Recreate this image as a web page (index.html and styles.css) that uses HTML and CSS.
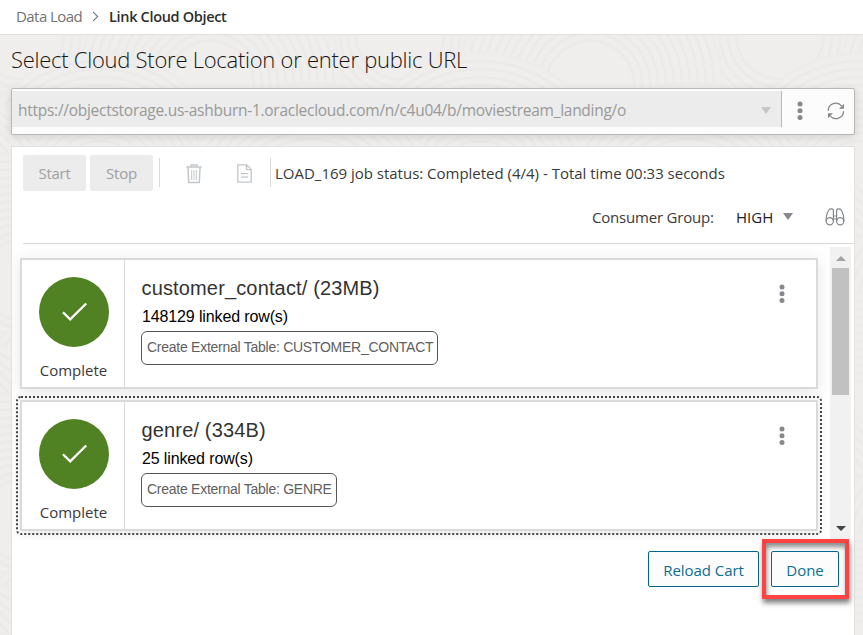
FILE: index.html
```html
<!DOCTYPE html>
<html lang="en">
<head>
<meta charset="utf-8">
<title>Link Cloud Object</title>
<link rel="stylesheet" href="styles.css">
</head>
<body>
<svg width="0" height="0" class="defs" aria-hidden="true">
  <symbol id="dots" viewBox="0 0 6 20"><circle cx="3" cy="3" r="2.5"/><circle cx="3" cy="9.8" r="2.5"/><circle cx="3" cy="16.6" r="2.5"/></symbol>
  <symbol id="check" viewBox="0 0 26 20"><path d="M1 10.2 8.2 17.4 24.2 1.5" fill="none" stroke="#fff" stroke-width="2.3"/></symbol>
</svg>
<header class="crumbs">
  <span class="crumb">Data Load</span>
  <svg class="chevron" width="7" height="11" viewBox="0 0 7 11"><path d="M1 .8 5.6 5.5 1 10.2"/></svg>
  <span class="crumb current">Link Cloud Object</span>
</header>
<main class="page">
  <svg class="texture" aria-hidden="true">
    <defs>
      <g id="rings">
        <circle r="132" fill="#efeeed" stroke="#edecea"/><circle r="124"/><circle r="116"/><circle r="108"/><circle r="100"/><circle r="92"/><circle r="84"/><circle r="76"/><circle r="68"/><circle r="60"/><circle r="52"/><circle r="44"/>
      </g>
      <pattern id="contours" width="380" height="240" patternUnits="userSpaceOnUse">
        <g fill="none" stroke="#ebeae8" stroke-width="2.4">
          <use href="#rings" x="20" y="0"/><use href="#rings" x="400" y="0"/>
          <use href="#rings" x="210" y="50"/><use href="#rings" x="100" y="150"/>
          <use href="#rings" x="310" y="180"/><use href="#rings" x="-70" y="180"/>
          <use href="#rings" x="20" y="250"/><use href="#rings" x="400" y="250"/><use href="#rings" x="200" y="290"/>
        </g>
      </pattern>
    </defs>
    <rect width="100%" height="100%" fill="url(#contours)"/>
  </svg>
  <h1 class="heading"><span>Select Cloud Store Location or enter public URL</span></h1>
  <div class="location">
    <div class="url"><span class="url-text">https://objectstorage.us-ashburn-1.oraclecloud.com/n/c4u04/b/moviestream_landing/o</span><i class="caret pale"></i></div>
    <svg class="dots" width="6" height="20"><use href="#dots"/></svg>
    <svg class="refresh" width="18" height="18" viewBox="0 0 18 18"><g fill="none" stroke="#85898d" stroke-width="1.3"><path d="M1.2 8.8A7.6 7.6 0 0 1 14.6 3.9"/><path d="M16.6 9.2A7.6 7.6 0 0 1 3.4 14.1"/></g><path d="M17 1.8v5h-5zM1 16.2v-5h5z" fill="#85898d"/></svg>
  </div>
  <section class="panel">
    <div class="toolbar">
      <button class="btn muted">Start</button>
      <button class="btn muted">Stop</button>
      <i class="rule first"></i>
      <svg class="trash" width="16" height="20" viewBox="0 0 16 20" fill="none" stroke="#c3c7ca"><path d="M.3 3h15.4M5 2.8V1h6v1.8M2 3.5l.7 15h10.6l.7-15" stroke-width="1.5"/><path d="M5.7 6v10M8 6v10M10.3 6v10"/></svg>
      <svg class="doc" width="15" height="19" viewBox="0 0 15 19" fill="none" stroke="#c3c7ca" stroke-width="1.3"><path d="M.8 .8h9l4.4 4.6v12.8H.8zM9.5 .8v4.9h4.7M4 9.7h7M4 13.2h7"/></svg>
      <i class="rule second"></i>
      <span class="status">LOAD_169 job status: Completed (4/4) - Total time 00:33 seconds</span>
    </div>
    <div class="filters">
      <span class="group-label">Consumer Group:</span>
      <span class="group-value">HIGH</span>
      <i class="caret"></i>
      <svg class="binoculars" width="20" height="18" viewBox="0 0 20 18" fill="none" stroke="#85898d" stroke-width="1.2"><circle cx="4.8" cy="13.2" r="3.6"/><circle cx="15.2" cy="13.2" r="3.6"/><path d="M1.1 13.2C1.2 8 2.4 4 3.8 2 4.7 .6 7.8.5 8.4 2V13.2M18.9 13.2C18.8 8 17.6 4 16.2 2 15.3 .6 12.2.5 11.6 2V13.2M8.4 8h3.2M8.4 11h3.2"/></svg>
    </div>
    <div class="list">
      <div class="cards">
        <article class="card">
          <div class="state"><div class="disc"><svg width="26" height="20"><use href="#check"/></svg></div><span class="state-text">Complete</span></div>
          <div class="info"><h2>customer_contact/ (23MB)</h2><p>148129 linked row(s)</p><span class="tag">Create External Table: CUSTOMER_CONTACT</span></div>
          <svg class="dots" width="6" height="20"><use href="#dots"/></svg>
        </article>
        <article class="card focused">
          <div class="state"><div class="disc"><svg width="26" height="20"><use href="#check"/></svg></div><span class="state-text">Complete</span></div>
          <div class="info"><h2>genre/ (334B)</h2><p>25 linked row(s)</p><span class="tag">Create External Table: GENRE</span></div>
          <svg class="dots" width="6" height="20"><use href="#dots"/></svg>
        </article>
      </div>
      <div class="scrollbar"><i class="arrow up"></i><i class="thumb"></i><i class="arrow down"></i></div>
    </div>
    <footer class="actions">
      <button class="btn outline reload">Reload Cart</button>
      <div class="marked"><button class="btn outline done">Done</button></div>
    </footer>
  </section>
</main>
</body>
</html>
```
FILE: styles.css
```css
* { box-sizing: border-box; }
body { margin: 0; height: 635px; overflow: hidden; background: #fff; font-family: "Open Sans", "Noto Sans", sans-serif; font-size: 15px; color: #3a3a3a; display: flex; flex-direction: column; }
h1, h2, p { margin: 0; font-weight: 400; }
button { font: inherit; padding: 0; margin: 0; }
i { display: block; flex: none; }
svg { flex: none; display: block; }
.defs { position: absolute; }
.crumbs { height: 35px; flex: none; border-bottom: 1px solid #e1e0df; display: flex; align-items: center; padding: 0 0 2px 16px; white-space: nowrap; }
.crumb { width: 66px; color: #737373; letter-spacing: -.55px; }
.crumb.current { width: auto; color: #2d2d2d; font-weight: 600; font-size: 14.5px; letter-spacing: -.33px; }
.chevron { margin: 0 10px; fill: none; stroke: #6b7780; stroke-width: 1.1; }
.page { position: relative; flex: 1; display: flex; flex-direction: column; padding: 0 8px 0 11px; background: #efeeed; min-height: 0; }
.texture { position: absolute; inset: 0; width: 100%; height: 100%; }
.heading { position: relative; height: 53px; line-height: 49px; font-size: 22px; font-weight: 300; color: #161513; white-space: nowrap; letter-spacing: -.26px; }
.location { position: relative; height: 47px; flex: none; border: 1px solid #b9b8b7; border-radius: 2px; background: #fcfcfc; box-shadow: 0 2px 8px rgba(0,0,0,.12); display: flex; align-items: center; }
.url { align-self: flex-start; margin-top: 2px; width: 770px; height: 36px; background: #ececec; display: flex; align-items: center; justify-content: space-between; padding: 0 10px 0 6px; border-right: 1px solid #b9b8b7; margin-right: 15px; }
.url-text { color: #999; white-space: nowrap; letter-spacing: -.27px; font-size: 15.5px; line-height: 36px; padding-top: 1px; }
.caret { width: 0; height: 0; border: 5px solid transparent; border-top: 7px solid #85898d; border-bottom: 0; }
.caret.pale { border-top-color: #c5c6c7; margin-top: 3px; }
.dots { fill: #85898d; }
.location .dots, .refresh { margin-top: -2px; }
.refresh { margin-left: 24px; }
.panel { position: relative; margin-top: 11px; flex: 1; background: #fff; border: 1px solid #e1e0df; border-bottom: 0; display: flex; flex-direction: column; min-height: 0; width: 844px; }
.toolbar { height: 43px; padding: 8px 0 0 11px; display: flex; align-items: flex-start; flex: none; }
.btn { height: 36px; border-radius: 2px; font-size: 15px; white-space: nowrap; }
.muted { width: 63px; border: 0; background: #ececec; color: #a0a0a0; margin-right: 4px; letter-spacing: -.25px; }
.rule { width: 1px; height: 29px; background: #d9d9d8; margin-top: 3px; }
.rule.first { margin-left: 2px; }
.trash { margin: 9px 0 0 26px; }
.doc { margin: 9px 0 0 35px; }
.rule.second { margin-left: 18px; }
.status { margin-left: 4px; line-height: 36px; white-space: nowrap; letter-spacing: -.01px; }
.filters { height: 54px; margin-left: 11px; border-bottom: 1px solid #d9d9d8; display: flex; align-items: center; padding-left: 569px; flex: none; white-space: nowrap; }
.group-label { width: 144px; letter-spacing: -.2px; }
.group-value { width: 47px; color: #222; }
.binoculars { margin-left: 32px; }
.list { height: 296px; flex: none; display: flex; padding-top: 3px; }
.cards { width: 818px; overflow: hidden; padding: 11px 0 0 8px; display: flex; flex-direction: column; gap: 11px; }
.card { width: 798px; height: 131px; flex: none; border: 2px solid #d9dad9; background: #fff; box-shadow: 0 2px 16px rgba(0,0,0,.1); display: flex; }
.focused { outline: 2px dotted #444; outline-offset: 2px; border-radius: 1px; }
.state { width: 103px; border-right: 1px solid #d9dad9; display: flex; flex-direction: column; align-items: center; padding: 17px 0 0 1px; }
.disc { width: 70px; height: 70px; border-radius: 50%; background: #508223; display: flex; align-items: center; justify-content: center; padding-left: 2px; }
.state-text { line-height: 24px; margin-top: 11px; }
.info { width: 635px; padding: 16px 0 0 16px; font-family: "Liberation Sans", Arial, sans-serif; white-space: nowrap; }
.info h2 { font-size: 20px; line-height: 24px; letter-spacing: .15px; margin-left: .5px; color: #333; }
.info p { font-size: 16px; line-height: 20px; margin: 7px 0 4px 1px; color: #000; letter-spacing: -.13px; }
.tag { display: inline-block; height: 34px; line-height: 31px; border: 1px solid #555; border-radius: 6px; padding: 0 4px 0 5px; font-size: 14px; color: #606060; letter-spacing: -.26px; }
.card .dots { margin: 24px 0 0 19px; }
.scrollbar { width: 21px; background: #f1f1f1; display: flex; flex-direction: column; align-items: center; }
.arrow { width: 0; height: 0; border: 5px solid transparent; }
.arrow.up { border-bottom-color: #a3a3a3; border-top: 0; margin-top: 9px; }
.arrow.down { border-top-color: #444; border-bottom: 0; margin-top: 131px; }
.thumb { width: 17px; height: 127px; background: #c1c1c1; margin-top: 7px; }
.actions { display: flex; justify-content: flex-end; padding-right: 5px; }
.outline { border: 1px solid #00688c; background: #fcfcfc; color: #0b6f92; padding-top: 1px; letter-spacing: -.05px; }
.reload { width: 111px; margin-top: 11px; margin-right: 3px; }
.done { width: 68px; display: block; }
.marked { position: relative; width: 87px; height: 60px; margin-top: -1px; padding: 8px 0 0 5px; border: 4px solid #ff4343; box-shadow: 1px 4px 5px rgba(0,0,0,.5), inset 1px 4px 5px rgba(0,0,0,.45); }
```
